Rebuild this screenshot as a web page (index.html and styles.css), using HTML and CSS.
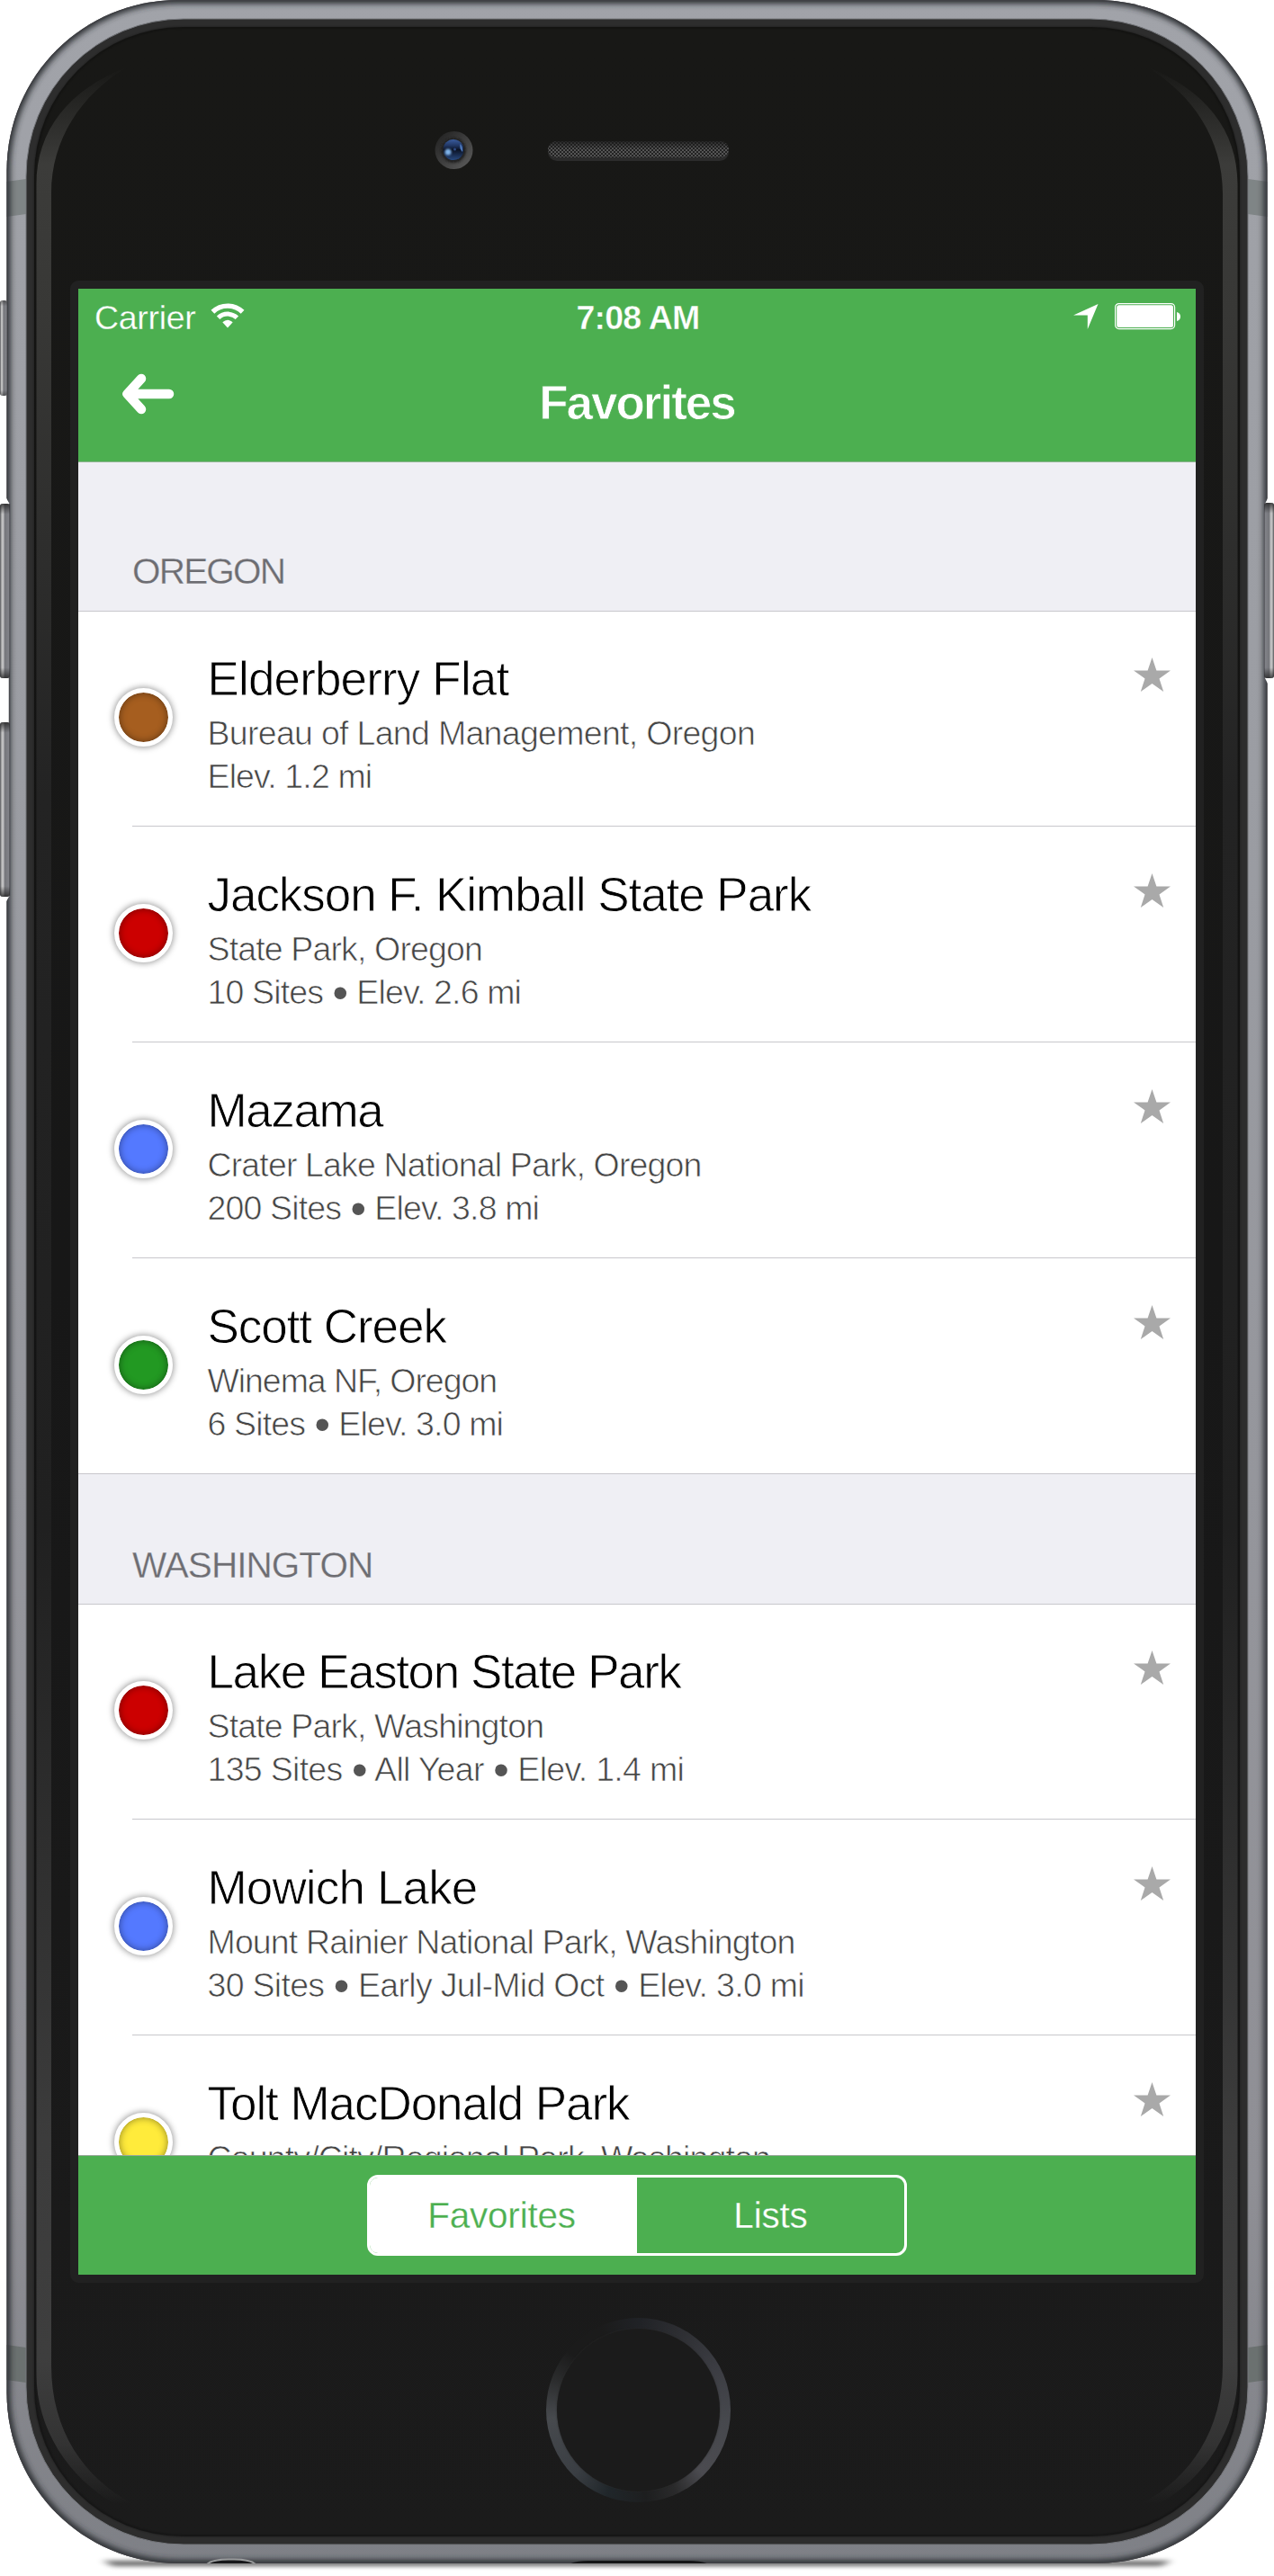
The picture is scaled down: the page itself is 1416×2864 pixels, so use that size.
FILE: index.html
```html
<!DOCTYPE html>
<html lang="en">
<head>
<meta charset="utf-8">
<title>Favorites</title>
<link rel="stylesheet" href="styles.css">
</head>
<body>
<svg width="0" height="0" class="defs">
  <symbol id="star" viewBox="0 0 41 38"><path d="M20.5 0 25.4 14.4H41L28.5 23.4 33.2 38 20.5 29 7.8 38 12.5 23.4 0 14.4H15.600Z"/></symbol>
</svg>
<div class="device">
  <svg class="shell" viewBox="0 0 1416 2864">
    <defs>
      <linearGradient id="metal" x1="0" y1="0" x2="0" y2="1">
        <stop offset="0" stop-color="#a1a3a9"/><stop offset=".3" stop-color="#9b9da3"/><stop offset=".85" stop-color="#8f8f95"/><stop offset="1" stop-color="#7e8086"/>
      </linearGradient>
      <linearGradient id="glass" x1="0" y1="0" x2="0" y2="1">
        <stop offset="0" stop-color="#181816"/><stop offset=".5" stop-color="#171717"/><stop offset="1" stop-color="#1b1b1b"/>
      </linearGradient>
      <linearGradient id="sheen" gradientUnits="userSpaceOnUse" x1="0" y1="74" x2="0" y2="2784">
        <stop offset="0" stop-color="#3c3c3a" stop-opacity="0"/><stop offset=".04" stop-color="#3c3c3a"/><stop offset=".1" stop-color="#383836"/><stop offset=".3" stop-color="#232323"/><stop offset=".6" stop-color="#202020"/><stop offset=".85" stop-color="#3c3c3c"/><stop offset=".94" stop-color="#3e3e3e"/><stop offset=".975" stop-color="#333"/><stop offset="1" stop-color="#333" stop-opacity="0"/>
      </linearGradient>
      <linearGradient id="key" x1="0" y1="0" x2="1" y2="0">
        <stop offset="0" stop-color="#55565a"/><stop offset=".2" stop-color="#c2c2c2"/><stop offset=".36" stop-color="#bcbcbe"/><stop offset=".48" stop-color="#75767b"/><stop offset=".9" stop-color="#828389"/><stop offset="1" stop-color="#3e3f43"/>
      </linearGradient>
      <linearGradient id="keyR" x1="1" y1="0" x2="0" y2="0">
        <stop offset="0" stop-color="#55565a"/><stop offset=".2" stop-color="#c2c2c2"/><stop offset=".36" stop-color="#bcbcbe"/><stop offset=".48" stop-color="#75767b"/><stop offset=".9" stop-color="#828389"/><stop offset="1" stop-color="#3e3f43"/>
      </linearGradient>
      <linearGradient id="fall" x1="0" y1="0" x2="0" y2="1">
        <stop offset="0" stop-color="#222" stop-opacity=".8"/><stop offset=".06" stop-color="#222" stop-opacity="0"/><stop offset=".94" stop-color="#222" stop-opacity="0"/><stop offset="1" stop-color="#222" stop-opacity=".8"/>
      </linearGradient>
      <linearGradient id="lens" x1="0" y1="0" x2="0" y2="1">
        <stop offset="0" stop-color="#3a5c9e"/><stop offset=".3" stop-color="#213764"/><stop offset=".5" stop-color="#0b1224"/><stop offset="1" stop-color="#28497f"/>
      </linearGradient>
      <linearGradient id="ring" x1="0" y1="0" x2="1" y2="1">
        <stop offset="0" stop-color="#1e1e1e"/><stop offset="1" stop-color="#5e5e5e"/>
      </linearGradient>
      <pattern id="mesh" width="4" height="4" patternUnits="userSpaceOnUse">
        <rect width="4" height="4" fill="#222"/><rect width="2" height="2" fill="#555"/><rect x="2" y="2" width="2" height="2" fill="#555"/>
      </pattern>
      <linearGradient id="meshShade" x1="0" y1="0" x2="0" y2="1">
        <stop offset="0" stop-color="#1a1a1a" stop-opacity=".8"/><stop offset=".5" stop-color="#1a1a1a" stop-opacity="0"/>
      </linearGradient>
      <filter id="b1" x="-10%" y="-10%" width="120%" height="120%"><feGaussianBlur stdDeviation="1"/></filter>
      <filter id="b4" x="-5%" y="-200%" width="110%" height="500%"><feGaussianBlur stdDeviation="5 2.500"/></filter>
      <filter id="b3" filterUnits="userSpaceOnUse" x="-20" y="-20" width="1460" height="2900"><feGaussianBlur stdDeviation="3"/></filter>
      <path id="frame" d="M198 0H1218C1323 0 1408.500 84 1408.500 190V2660C1408.500 2766 1323 2850 1218 2850H198C93 2850 7.500 2766 7.500 2660V190C7.500 84 93 0 198 0Z"/>
      <clipPath id="body"><use href="#frame"/></clipPath>
    </defs>
    <path d="M114 2847H1302L1290 2853H126Z" fill="#000" opacity=".6" filter="url(#b4)"/>
    <use href="#frame" fill="url(#metal)"/>
    <g clip-path="url(#body)">
      <path d="M7 202 29 199V238L7 241ZM1409 202 1387 199V238L1409 241Z" fill="#7f8586"/>
      <path d="M7 2607 29 2610V2649L7 2646ZM1409 2607 1387 2610V2649L1409 2646Z" fill="#6b7170"/>
      <use href="#frame" fill="none" stroke="#2c2d30" stroke-width="8" filter="url(#b3)"/>
      <use href="#frame" fill="none" stroke="#404145" stroke-width="3"/>
      <path d="M230 2851Q236 2845 257 2845.500Q278 2845 284 2851" fill="#17181a" stroke="#999b9c" stroke-width="2"/>
      <path d="M632 2851Q640 2847 654 2847H766Q780 2847 788 2851Z" fill="#151617"/>
    </g>
    <rect x="29" y="21" width="1358" height="2808" rx="175" ry="175" fill="#2d2d2d" stroke="#76787d" stroke-width="1"/>
    <rect x="38" y="30" width="1340" height="2790" rx="165" ry="165" fill="url(#glass)"/>
    <rect x="38.500" y="30.500" width="1339" height="2789" rx="165" fill="none" stroke="#0d0d0d" stroke-width="1" filter="url(#b1)" opacity=".6"/>
    <path d="M142 74C76 100 40.500 145 40.500 205V2640C40.500 2700 76 2755 128 2784L148 2784C93 2755 57 2702 57 2630V215C57 155 90 105 142 74Z" fill="url(#sheen)"/>
    <path d="M1274 74C1340 100 1375.500 145 1375.500 205V2640C1375.500 2700 1340 2755 1288 2784L1268 2784C1323 2755 1359 2702 1359 2630V215C1359 155 1326 105 1274 74Z" fill="url(#sheen)"/>
    <path d="M6 552 10.500 560V996L6 1004Z" fill="#fff"/>
    <path d="M1410 552 1406 560V754L1410 762Z" fill="#fff"/>
    <path d="M10.500 560V996" stroke="#4a4b4f" stroke-width="1.500"/>
    <g>
      <rect x="0" y="334" width="8" height="106" rx="3" fill="url(#key)"/><rect x="0" y="334" width="8" height="106" rx="3" fill="url(#fall)" opacity=".6"/>
      <rect x="0" y="560" width="11" height="194" rx="3" fill="url(#key)"/><rect x="0" y="560" width="11" height="194" rx="3" fill="url(#fall)"/>
      <rect x="0" y="803" width="11" height="194" rx="3" fill="url(#key)"/><rect x="0" y="803" width="11" height="194" rx="3" fill="url(#fall)"/>
      <rect x="1405" y="559" width="11" height="195" rx="3" fill="url(#keyR)"/><rect x="1405" y="559" width="11" height="195" rx="3" fill="url(#fall)"/>
    </g>
    <circle cx="504.500" cy="167" r="21" fill="url(#ring)"/>
    <circle cx="504" cy="167" r="14" fill="#222" filter="url(#b1)"/>
    <circle cx="504" cy="166.500" r="11.500" fill="url(#lens)"/>
    <circle cx="498" cy="169" r="3.500" fill="#7fb2e8" filter="url(#b1)"/>
    <path d="M511.500 160Q510 165 514 169Q515.500 164 511.500 160Z" fill="#4c76b8"/>
    <circle cx="505.500" cy="166" r="1.500" fill="#2d4a85"/>
    <rect x="609" y="157" width="201" height="22" rx="10" fill="#2b2b2b"/>
    <rect x="609" y="157" width="201" height="18" rx="9" fill="url(#mesh)"/>
    <rect x="609" y="157" width="201" height="18" rx="9" fill="url(#meshShade)"/>
  </svg>
  <div class="home"></div>
  <main class="screen">
    <header class="bar">
      <div class="status">
        <div class="carrier"><span>Carrier</span>
          <svg width="38" height="28" viewBox="0 0 38 28"><path d="M2.400 9.800A24 24 0 0 1 35.600 9.800" fill="none" stroke="#fff" stroke-width="5.400"/><path d="M8.600 16.300A15 15 0 0 1 29.400 16.300" fill="none" stroke="#fff" stroke-width="5"/><path d="M19 27.500 13.300 21.300Q19 16.300 24.700 21.300Z" fill="#fff"/></svg>
        </div>
        <div class="time">7:08 AM</div>
        <div class="right">
          <svg width="28" height="28" viewBox="0 0 28 28"><path d="M27.500 0 15.800 28V12.500H0Z" fill="#fff"/></svg>
          <svg width="74" height="30" viewBox="0 0 74 30"><rect x=".6" y=".6" width="66" height="28" rx="4" fill="none" stroke="#fff" stroke-width="1.200"/><rect x="2.200" y="2.200" width="62.800" height="24.800" rx="2.500" fill="#fff"/><path d="M69 10Q73 11 73 15T69 20Z" fill="#fff"/></svg>
        </div>
      </div>
      <div class="nav">
        <svg class="back" width="60" height="48" viewBox="0 0 60 48"><path d="M22 7 6.500 24 22 41M7 24H53" fill="none" stroke="#fff" stroke-width="10.500" stroke-linecap="round" stroke-linejoin="round"/></svg>
        <h1>Favorites</h1>
      </div>
    </header>
    <div class="list">
      <h2 class="first">OREGON</h2>
      <ul>
        <li><i class="dot brown"></i><div class="txt"><b class="open">Elderberry Flat</b><p class="open">Bureau of Land Management, Oregon</p><p>Elev. 1.2 mi</p></div><svg class="star"><use href="#star"/></svg></li>
        <li><i class="dot red"></i><div class="txt"><b>Jackson F. Kimball State Park</b><p>State Park, Oregon</p><p>10 Sites <s>•</s> Elev. 2.6 mi</p></div><svg class="star"><use href="#star"/></svg></li>
        <li><i class="dot blue"></i><div class="txt"><b class="tight">Mazama</b><p>Crater Lake National Park, Oregon</p><p>200 Sites <s>•</s> Elev. 3.8 mi</p></div><svg class="star"><use href="#star"/></svg></li>
        <li><i class="dot green"></i><div class="txt"><b>Scott Creek</b><p class="tight">Winema NF, Oregon</p><p>6 Sites <s>•</s> Elev. 3.0 mi</p></div><svg class="star"><use href="#star"/></svg></li>
      </ul>
      <h2>WASHINGTON</h2>
      <ul>
        <li><i class="dot red"></i><div class="txt"><b class="tight">Lake Easton State Park</b><p>State Park, Washington</p><p class="open">135 Sites <s>•</s> All Year <s>•</s> Elev. 1.4 mi</p></div><svg class="star"><use href="#star"/></svg></li>
        <li><i class="dot blue"></i><div class="txt"><b class="open">Mowich Lake</b><p>Mount Rainier National Park, Washington</p><p class="open">30 Sites <s>•</s> Early Jul-Mid Oct <s>•</s> Elev. 3.0 mi</p></div><svg class="star"><use href="#star"/></svg></li>
        <li><i class="dot yellow"></i><div class="txt"><b>Tolt MacDonald Park</b><p>County/City/Regional Park, Washington</p></div><svg class="star"><use href="#star"/></svg></li>
      </ul>
    </div>
    <footer class="tabs">
      <div class="segment"><span class="on">Favorites</span><span>Lists</span></div>
    </footer>
  </main>
</div>
</body>
</html>
```

FILE: styles.css
```css
* { box-sizing: border-box; margin: 0; padding: 0; }
body { background: #fff; font-family: "Liberation Sans", Arial, sans-serif; }
.defs { position: absolute; }
.device { position: relative; width: 1416px; height: 2864px; padding: 312px 78px 0; overflow: hidden; }
.shell { position: absolute; left: 0; top: 0; width: 1416px; height: 2864px; }
.home {
  position: absolute; left: 607px; top: 2577px; width: 205px; height: 205px; border-radius: 50%;
  background: conic-gradient(#202226 0deg, #2c2d31 25deg, #3b3c42 60deg, #46484d 95deg, #4b4b50 135deg, #2a2a2b 155deg, #1d1e1f 175deg, #20262a 200deg, #3a3e43 225deg, #474a4e 265deg, #2b2c2d 290deg, #1b1b1b 310deg, #1b1b1b 335deg, #202226 360deg);
}
.home::after { content: ""; position: absolute; inset: 12px; border-radius: 50%; background: #1b1b1b; box-shadow: 0 0 2px #2b2b2b; }

.screen {
  position: relative; width: 1260px; height: 2226px; border: 9px solid #212121; border-radius: 9px;
  display: flex; flex-direction: column; background: #212121;
}
.bar { height: 193px; flex: none; background: #4caf50; border-bottom: 1px solid #8fb391; color: #fff; }
.status { height: 62px; display: grid; grid-template-columns: 1fr auto 1fr; align-items: center; padding: 0 16px 0 18px; font-size: 37.5px; line-height: 62px; }
.carrier { display: flex; align-items: center; gap: 16px; -webkit-text-stroke: .3px #4caf50; letter-spacing: -.3px; }
.carrier span, .time { padding-top: 2px; line-height: 60px; }
.carrier svg { margin-bottom: 3px; }
.time { font-weight: bold; letter-spacing: -.75px; -webkit-text-stroke: .4px #4caf50; }
.right { display: flex; justify-content: flex-end; align-items: center; gap: 18px; }
.nav { height: 130px; display: grid; grid-template-columns: 1fr auto 1fr; align-items: center; padding: 0 48px; }
.back { margin-bottom: 20px; }
h1 { font-size: 53px; line-height: 60px; letter-spacing: -2px; -webkit-text-stroke: .8px #4caf50; }

.list { flex: 1; min-height: 0; overflow: hidden; background: #fff; }
h2 { height: 144px; padding: 82px 0 0 60px; background: #efeff4; color: #6d6d72; font-size: 40.5px; font-weight: normal; line-height: 39px; letter-spacing: -.95px; -webkit-text-stroke: .3px #efeff4; }
h2.first { height: 165px; padding-top: 102px; letter-spacing: -1.8px; }
ul { list-style: none; border-top: 1px solid #c8c7cc; border-bottom: 1px solid #c8c7cc; }
li { position: relative; height: 240px; display: flex; align-items: flex-start; padding: 51px 28px 0 40px; }
li:first-child { height: 239px; padding-top: 50px; }
li:last-child { height: 239px; }
li:not(:last-child)::after { content: ""; position: absolute; left: 60px; right: 0; bottom: 0; height: 1px; background: #c8c7cc; }
.dot { flex: none; width: 65px; height: 65px; margin-top: 35px; border: 5.5px solid #fff; border-radius: 50%; background-clip: padding-box; box-shadow: 0 0 7px 1px rgba(0,0,0,.4), inset 0 0 9px rgba(0,0,0,.45); }
.brown { background-color: #a65e1f; }
.red { background-color: #cc0000; }
.blue { background-color: #5479ff; }
.green { background-color: #229922; }
.yellow { background-color: #ffeb3b; }
.txt { flex: 1; margin-top: -1px; padding-left: 38.5px; white-space: nowrap; }
.txt b { display: block; height: 62px; font-size: 53px; font-weight: normal; line-height: 51px; letter-spacing: -1.05px; color: #000; -webkit-text-stroke: .8px #fff; }
.txt b.tight { letter-spacing: -1.4px; }
.txt b.open { letter-spacing: -.85px; }
.txt p { height: 48px; font-size: 37.5px; line-height: 48px; letter-spacing: -.86px; color: #444; -webkit-text-stroke: .7px #fff; }
.txt p.tight { letter-spacing: -1.07px; }
.txt p.open { letter-spacing: -.7px; }
.txt s { margin: 0 .7px; text-decoration: none; font-size: 50px; line-height: 0; vertical-align: -5px; color: #555; -webkit-text-stroke: 0; }
.star { flex: none; width: 41px; height: 38px; margin-top: 1px; fill: #a9a9a9; }

.tabs { flex: none; height: 133px; border-top: 1px solid #98a899; background: #4caf50; display: flex; justify-content: center; padding-top: 21px; }
.segment { display: flex; width: 600px; height: 90px; border: 3px solid #fff; border-radius: 12px; overflow: hidden; font-size: 40.5px; line-height: 85px; text-align: center; }
.segment span { flex: 0 0 297px; color: #fff; letter-spacing: -.2px; -webkit-text-stroke: .3px #4caf50; }
.segment .on { padding-right: 4px; background: #fff; color: #4caf50; -webkit-text-stroke-color: #fff; }
```
